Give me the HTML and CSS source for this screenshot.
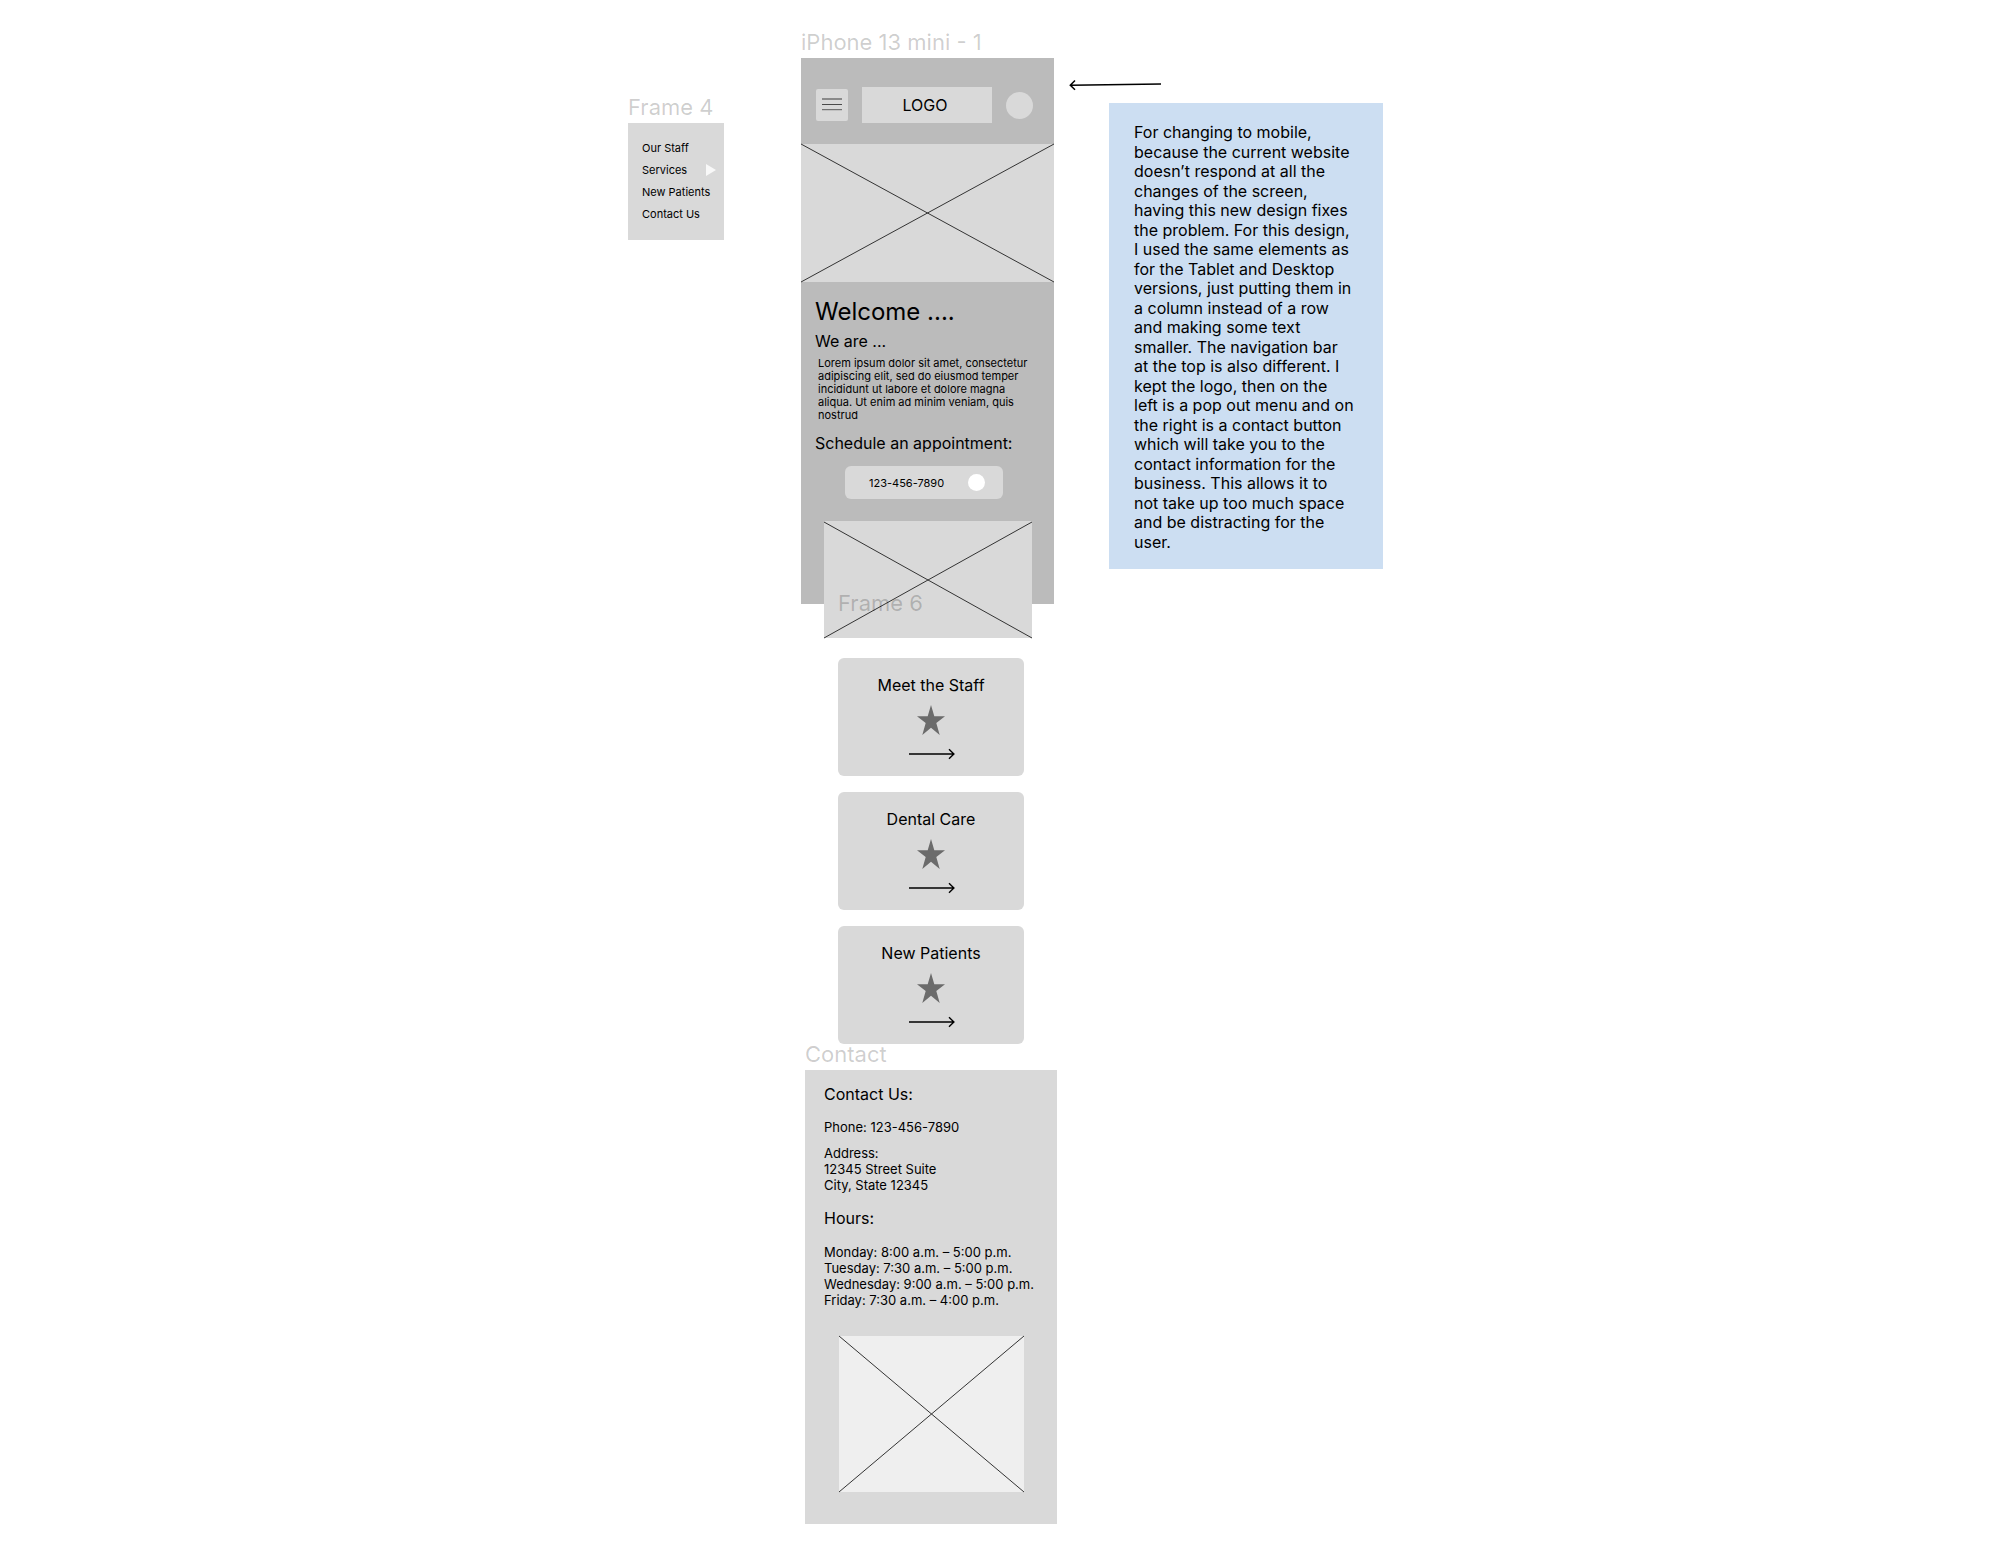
FILE: index.html
```html
<!DOCTYPE html>
<html lang="en">
<head>
<meta charset="utf-8">
<meta name="viewport" content="width=device-width, initial-scale=1">
<title>iPhone 13 mini wireframe</title>
<link rel="stylesheet" href="styles.css">
</head>
<body>
<svg class="defs" width="0" height="0" aria-hidden="true">
  <symbol id="star" viewBox="0 0 28 30" preserveAspectRatio="none"><path d="M14 0 L17.3 11.2 H28 L19.3 18.1 L22.7 30 L14 22.8 L5.3 30 L8.7 18.1 L0 11.2 H10.7 Z" fill="#6b6b6b"/></symbol>
  <symbol id="arrow" viewBox="0 0 47 12"><path d="M1 6 H45.5 M41 1.3 L45.9 6 L41 10.7" fill="none" stroke="#000" stroke-width="1.4"/></symbol>
</svg>
<main class="board">
  <section class="menu-column">
    <h2 class="frame-label">Frame 4</h2>
    <nav class="menu">
      <a href="#staff">Our Staff</a>
      <a href="#services" class="has-submenu">Services
        <svg width="10" height="12" viewBox="0 0 10 12" aria-hidden="true"><path d="M0 0 L10 6 L0 12 Z" fill="#f8f8f8"/></svg>
      </a>
      <a href="#patients">New Patients</a>
      <a href="#contact">Contact Us</a>
    </nav>
  </section>

  <div class="phone-column">
    <h2 class="frame-label">iPhone 13 mini - 1</h2>
    <section class="phone">
      <header class="topbar">
        <button class="hamburger" type="button" aria-label="Menu">
          <svg width="20" height="14" viewBox="0 0 20 14" aria-hidden="true"><path d="M0 1 H20" stroke="#8a8a8a" stroke-width="2"/><path d="M0 6.5 H20" stroke="#4a4a4a"/><path d="M0 11.7 H20" stroke="#5a5a5a"/></svg>
        </button>
        <div class="logo">LOGO</div>
        <button class="contact-dot" type="button" aria-label="Contact"></button>
      </header>
      <svg class="picture hero" viewBox="0 0 253 138" preserveAspectRatio="none" aria-hidden="true"><path d="M0 0 L253 138 M253 0 L0 138"/></svg>
      <div class="intro">
        <h1>Welcome ....</h1>
        <h3>We are ...</h3>
        <p>Lorem ipsum dolor sit amet, consectetur adipiscing elit, sed do eiusmod temper incididunt ut labore et dolore magna aliqua. Ut enim ad minim veniam, quis nostrud</p>
        <h3>Schedule an appointment:</h3>
      </div>
      <button class="call" type="button">123-456-7890<span class="call-dot"></span></button>
      <svg class="picture office" viewBox="0 0 208 117" preserveAspectRatio="none" aria-hidden="true"><path d="M0 1 L208 117 M208 1 L0 117"/></svg>
    </section>

    <section class="cards">
      <h2 class="frame-label">Frame 6</h2>
      <a class="card" id="staff" href="#staff">Meet the Staff
        <svg class="star" aria-hidden="true"><use href="#star"/></svg>
        <svg class="arrow" aria-hidden="true"><use href="#arrow"/></svg>
      </a>
      <a class="card" id="services" href="#services">Dental Care
        <svg class="star" aria-hidden="true"><use href="#star"/></svg>
        <svg class="arrow" aria-hidden="true"><use href="#arrow"/></svg>
      </a>
      <a class="card" id="patients" href="#patients">New Patients
        <svg class="star" aria-hidden="true"><use href="#star"/></svg>
        <svg class="arrow" aria-hidden="true"><use href="#arrow"/></svg>
      </a>
    </section>

    <section class="contact-section" id="contact">
      <h2 class="frame-label">Contact</h2>
      <div class="contact">
        <h3>Contact Us:</h3>
        <p class="phone-line">Phone: 123-456-7890</p>
        <p class="address">Address:<br>12345 Street Suite<br>City, State 12345</p>
        <h3>Hours:</h3>
        <p class="hours">Monday: 8:00 a.m. – 5:00 p.m.<br>Tuesday: 7:30 a.m. – 5:00 p.m.<br>Wednesday: 9:00 a.m. – 5:00 p.m.<br>Friday: 7:30 a.m. – 4:00 p.m.</p>
        <svg class="picture map" viewBox="0 0 185 156" preserveAspectRatio="none" aria-hidden="true"><path d="M0 0 L185 156 M185 0 L0 156"/></svg>
      </div>
    </section>
  </div>

  <aside class="note-column">
    <svg class="pointer" width="92" height="12" viewBox="0 0 92 12" aria-hidden="true"><path d="M92 5 L1.5 6.2 M6 1.5 L1.3 6.2 L6 10.8" fill="none" stroke="#000" stroke-width="1.5"/></svg>
    <p class="note">For changing to mobile, because the current website doesn’t respond at all the changes of the screen, having this new design fixes the problem. For this design, I used the same elements as for the Tablet and Desktop versions, just putting them in a column instead of a row and making some text smaller. The navigation bar at the top is also different. I kept the logo, then on the left is a pop out menu and on the right is a contact button which will take you to the contact information for the business. This allows it to not take up too much space and be distracting for the user.</p>
  </aside>
</main>
</body>
</html>
```
FILE: styles.css
```css
* {
  box-sizing: border-box;
}

body {
  margin: 0;
  background: #fff;
  color: #000;
  font-family: Inter, "Liberation Sans", sans-serif;
  font-size: 16px;
  line-height: 20px;
}

h1, h2, h3, p {
  margin: 0;
  font-weight: 400;
}

h3 {
  font-size: 16px;
  line-height: 20px;
}

a {
  color: inherit;
  text-decoration: none;
}

button {
  border: 0;
  padding: 0;
  font: inherit;
  color: inherit;
  background: #d9d9d9;
}

svg {
  display: block;
}

.defs {
  position: absolute;
}

/* Canvas: three columns centred in the window */
.board {
  display: flex;
  justify-content: center;
  align-items: flex-start;
  padding: 32px 0 24px;
}

.frame-label {
  margin-bottom: 6px;
  font-size: 22px;
  line-height: 20px;
  white-space: nowrap;
  color: rgba(0, 0, 0, 0.2);
}

/* Pop-out menu */
.menu-column {
  width: 96px;
  margin: 65px 77px 0 0;
}

.menu {
  display: flex;
  flex-direction: column;
  padding: 14px 8px 15px 14px;
  background: #d9d9d9;
  font-size: 11px;
  line-height: 22px;
}

.has-submenu {
  display: flex;
  justify-content: space-between;
  align-items: center;
}

/* Phone frame */
.phone-column {
  width: 253px;
}

/* The last picture hangs out over the bottom edge of the frame */
.phone {
  display: flex;
  flex-direction: column;
  background: #bbb;
}

.topbar {
  display: flex;
  align-items: center;
  gap: 14px;
  padding: 29px 21px 21px 15px;
}

.hamburger {
  display: grid;
  place-items: center;
  width: 32px;
  height: 32px;
  border-radius: 2px;
}

.logo {
  flex: 1;
  padding: 8px 4px 8px 0;
  background: #d9d9d9;
  text-align: center;
}

.contact-dot {
  width: 27px;
  height: 27px;
  border-radius: 50%;
}

.picture {
  overflow: visible;
  background: #d9d9d9;
  fill: none;
  stroke: #333;
  stroke-width: 1px;
}

.hero {
  width: 100%;
  height: 138px;
}

.intro {
  padding: 15px 15px 13px 14px;
}

.intro h1 {
  margin-bottom: 4px;
  font-size: 24px;
  line-height: 30px;
}

.intro p {
  margin: 6px 0 11px 3px;
  font-size: 11px;
  line-height: 13px;
}

.call {
  display: flex;
  align-items: center;
  justify-content: space-between;
  width: 158px;
  height: 33px;
  margin: 0 auto 22px 44px;
  padding: 0 18px 0 24px;
  border-radius: 6px;
  font-size: 11px;
}

.call-dot {
  width: 17px;
  height: 17px;
  border-radius: 50%;
  background: #fff;
}

.office {
  width: 208px;
  height: 117px;
  margin: 0 auto -34px 23px;
}

/* Link cards */
.cards {
  position: relative;
  display: flex;
  flex-direction: column;
  gap: 16px;
  width: 186px;
  margin: -11px 0 0 37px;
}

.cards .frame-label {
  margin-bottom: 29px;
}

.card {
  display: flex;
  flex-direction: column;
  align-items: center;
  padding: 17px 0 16px;
  border-radius: 6px;
  background: #d9d9d9;
}

.star {
  width: 28px;
  height: 30px;
  margin: 10px 0 13px;
}

.arrow {
  width: 47px;
  height: 12px;
}

/* Contact frame */
.contact-section {
  margin: 0 -3px 0 4px;
}

.contact {
  padding: 14px 0 32px 19px;
  background: #d9d9d9;
  font-size: 13px;
  line-height: 16px;
  white-space: nowrap;
}

.phone-line {
  margin: 15px 0 10px;
}

.address {
  margin-bottom: 15px;
}

.hours {
  margin: 16px 0 28px;
}

.map {
  width: 185px;
  height: 156px;
  margin-left: 15px;
  background: #efefef;
}

/* Annotation */
.note-column {
  width: 314px;
  margin: 47px 0 0 15px;
}

.note {
  margin: 12px 0 0 40px;
  padding: 20px 28px 17px 25px;
  background: #ccdef2;
  line-height: 1.22;
}
```
